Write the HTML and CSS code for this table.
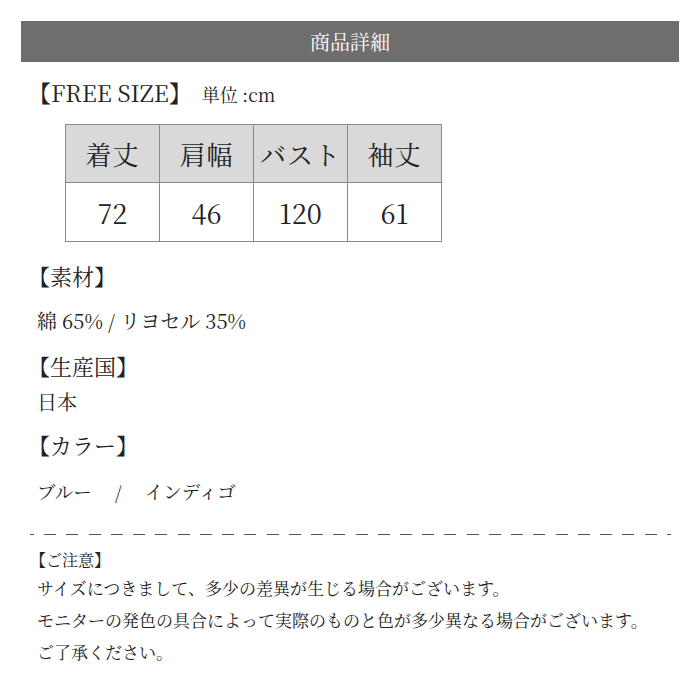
FILE: index.html
```html
<!DOCTYPE html>
<html lang="ja">
<head>
<meta charset="utf-8">
<title>商品詳細</title>
<link rel="stylesheet" href="styles.css">
</head>
<body>
<div class="page">
  <div class="title-bar">商品詳細</div>

  <div class="size-line">
    <span class="size-label">【FREE SIZE】</span>
    <span class="unit">単位 :cm</span>
  </div>

  <table class="size-table">
    <thead>
      <tr><th>着丈</th><th>肩幅</th><th>バスト</th><th>袖丈</th></tr>
    </thead>
    <tbody>
      <tr><td>72</td><td>46</td><td>120</td><td>61</td></tr>
    </tbody>
  </table>

  <h3 class="spec-head head-material">【素材】</h3>
  <p class="spec-text text-material">綿 65% / リヨセル 35%</p>

  <h3 class="spec-head head-origin">【生産国】</h3>
  <p class="spec-text text-origin">日本</p>

  <h3 class="spec-head head-color">【カラー】</h3>
  <p class="spec-text text-color">ブルー　 /　 インディゴ</p>

  <div class="dash-line">
    <span class="dash short"></span>
    <span class="dash"></span><span class="dash"></span><span class="dash"></span><span class="dash"></span>
    <span class="dash"></span><span class="dash"></span><span class="dash"></span><span class="dash"></span>
    <span class="dash"></span><span class="dash"></span><span class="dash"></span><span class="dash"></span>
    <span class="dash"></span><span class="dash"></span><span class="dash"></span><span class="dash"></span>
    <span class="dash"></span><span class="dash"></span><span class="dash"></span><span class="dash"></span>
    <span class="dash"></span><span class="dash"></span><span class="dash"></span><span class="dash"></span>
    <span class="dash"></span><span class="dash"></span><span class="dash"></span><span class="dash"></span>
    <span class="dash short"></span>
  </div>

  <div class="notice">
    <p class="notice-head">【ご注意】</p>
    <p class="notice-line">サイズにつきまして、多少の差異が生じる場合がございます。</p>
    <p class="notice-line">モニターの発色の具合によって実際のものと色が多少異なる場合がございます。</p>
    <p class="notice-line">ご了承ください。</p>
  </div>
</div>
</body>
</html>
```

FILE: styles.css
```css
html, body {
  margin: 0;
  padding: 0;
  background: #ffffff;
}

body {
  font-family: "Noto Serif CJK JP", "Liberation Serif", "Noto Sans CJK JP", serif;
  color: #222222;
}

.page {
  width: 700px;
  height: 690px;
  padding-top: 21px;
  box-sizing: border-box;
}

.title-bar {
  margin: 0 21px;
  height: 41px;
  line-height: 41px;
  background: #6e6e6e;
  color: #ffffff;
  text-align: center;
  font-size: 20px;
}

.size-line {
  margin: 16px 0 0 28px;
  height: 30px;
  line-height: 30px;
  display: flex;
  align-items: baseline;
}

.size-label {
  font-size: 23px;
}

.unit {
  font-size: 18px;
  margin-left: 10px;
}

.size-table {
  margin: 16px 0 0 65px;
  border-collapse: collapse;
  table-layout: fixed;
  width: 377px;
}

.size-table th,
.size-table td {
  border: 1px solid #8a8a8a;
  text-align: center;
  padding: 0;
  font-weight: normal;
}

.size-table th {
  background: #d9d9d9;
  height: 57px;
  font-size: 26px;
  letter-spacing: 1px;
}

.size-table td {
  height: 58px;
  font-size: 27px;
}

.spec-head {
  margin: 0 0 0 28px;
  font-size: 22px;
  font-weight: normal;
  height: 30px;
  line-height: 30px;
}

.spec-text {
  margin: 0 0 0 37px;
  font-size: 20px;
  height: 30px;
  line-height: 30px;
}

.head-material { margin-top: 19px; }
.text-material { margin-top: 15px; }
.head-origin { margin-top: 15px; }
.text-origin { margin-top: 6px; }
.head-color { margin-top: 13px; }
.text-color {
  margin-top: 16px;
  font-size: 18.5px;
}

.dash-line {
  margin: 28px 29px 0 30px;
  height: 1px;
  display: flex;
  justify-content: space-between;
}

.dash {
  width: 12px;
  height: 1px;
  background: #555555;
}

.dash.short {
  width: 4px;
}

.notice {
  margin: 13px 0 0 0;
}

.notice-head {
  margin: 0 0 0 30px;
  font-size: 16px;
  height: 24px;
  line-height: 24px;
}

.notice-line {
  margin: 0 0 0 37px;
  font-size: 17px;
  height: 32px;
  line-height: 32px;
}
```
